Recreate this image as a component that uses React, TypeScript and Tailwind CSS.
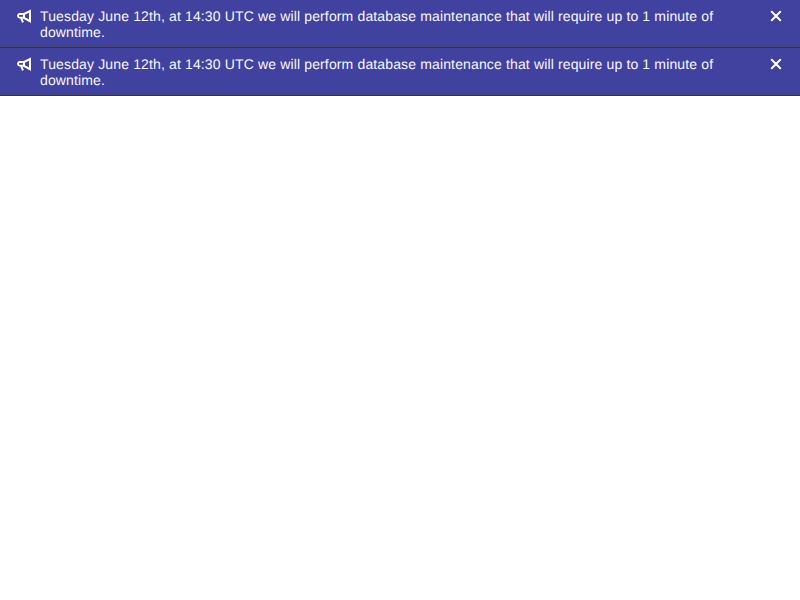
const message =
  "Tuesday June 12th, at 14:30 UTC we will perform database maintenance that will require up to 1 minute of downtime.";

function BullhornIcon() {
  return (
    <svg className="size-4 shrink-0" viewBox="0 0 16 16" fill="none" stroke="currentColor" strokeWidth="2">
      <path d="M8 6l6-3v10.2L8 9.8z" />
      <path d="M8 6H3.6A1.7 1.7 0 0 0 2 7.7a1.9 1.9 0 0 0 1.7 1.9H8" strokeWidth="1.8" />
      <path d="M5 9.6l2 4.8" />
    </svg>
  );
}

function CloseIcon() {
  return (
    <svg className="size-4" viewBox="0 0 16 16" fill="none" stroke="currentColor" strokeWidth="2" strokeLinecap="round">
      <path d="M3.75 3.75l8.5 8.5M12.25 3.75l-8.5 8.5" />
    </svg>
  );
}

function Banner() {
  return (
    <div className="flex items-start border-b border-[#333238] bg-[#41419f] px-4 pt-2 pb-[7px] text-white">
      <BullhornIcon />
      <p className="ml-2 mr-8 flex-1 text-sm leading-4 tracking-[0.01em] text-[#f8f8ff] [text-rendering:geometricPrecision]">
        {message}
      </p>
      <button aria-label="Close" className="text-white">
        <CloseIcon />
      </button>
    </div>
  );
}

export default function App() {
  return (
    <div className="min-h-screen bg-white font-['Liberation_Sans',Arial,sans-serif]">
      <Banner />
      <Banner />
    </div>
  );
}
